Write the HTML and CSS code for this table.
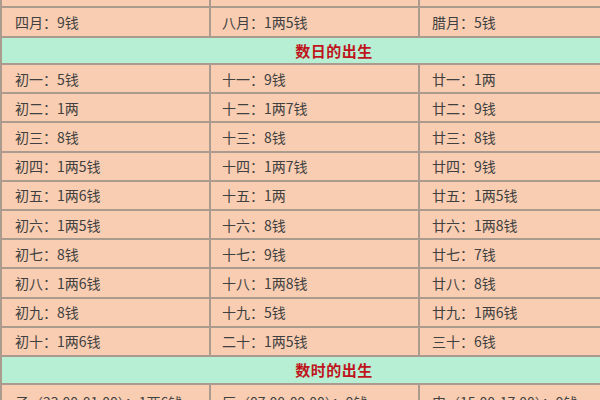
FILE: index.html
```html
<!DOCTYPE html>
<html lang="zh">
<head>
<meta charset="utf-8">
<title>称骨表</title>
<link rel="stylesheet" href="styles.css">
</head>
<body>
<div class="viewport">
  <div class="table">
    <div class="cell c1">三月：1两8钱</div>
    <div class="cell c2">七月：9钱</div>
    <div class="cell c3">十一月：9钱</div>

    <div class="cell c1">四月：9钱</div>
    <div class="cell c2">八月：1两5钱</div>
    <div class="cell c3">腊月：5钱</div>

    <div class="head">数日的出生</div>

    <div class="cell c1">初一：5钱</div><div class="cell c2">十一：9钱</div><div class="cell c3">廿一：1两</div>
    <div class="cell c1">初二：1两</div><div class="cell c2">十二：1两7钱</div><div class="cell c3">廿二：9钱</div>
    <div class="cell c1">初三：8钱</div><div class="cell c2">十三：8钱</div><div class="cell c3">廿三：8钱</div>
    <div class="cell c1">初四：1两5钱</div><div class="cell c2">十四：1两7钱</div><div class="cell c3">廿四：9钱</div>
    <div class="cell c1">初五：1两6钱</div><div class="cell c2">十五：1两</div><div class="cell c3">廿五：1两5钱</div>
    <div class="cell c1">初六：1两5钱</div><div class="cell c2">十六：8钱</div><div class="cell c3">廿六：1两8钱</div>
    <div class="cell c1">初七：8钱</div><div class="cell c2">十七：9钱</div><div class="cell c3">廿七：7钱</div>
    <div class="cell c1">初八：1两6钱</div><div class="cell c2">十八：1两8钱</div><div class="cell c3">廿八：8钱</div>
    <div class="cell c1">初九：8钱</div><div class="cell c2">十九：5钱</div><div class="cell c3">廿九：1两6钱</div>
    <div class="cell c1">初十：1两6钱</div><div class="cell c2">二十：1两5钱</div><div class="cell c3">三十：6钱</div>

    <div class="head">数时的出生</div>

    <div class="cell c1 hour">子（23:00-01:00）：1两6钱</div>
    <div class="cell c2 hour">辰（07:00-09:00）：9钱</div>
    <div class="cell c3 hour">申（15:00-17:00）：9钱</div>
  </div>
</div>
</body>
</html>
```

FILE: styles.css
```css
html, body {
  margin: 0;
  padding: 0;
  background: #f8cdb2;
}

.viewport {
  width: 600px;
  height: 400px;
  overflow: hidden;
}

.table {
  width: 664px;
  display: grid;
  grid-template-columns: 207px 207px 1fr;
  grid-template-rows: 28px 28px 25px repeat(10, 27.2px) 26px 40px;
  gap: 2px;
  padding-left: 2px;
  margin-top: -22px;
  background: #ab9b8e;
  font-family: "Noto Sans CJK SC", "Noto Sans", sans-serif;
  font-size: 14px;
  color: #404040;
}

.cell {
  background: #f8cdb2;
  display: flex;
  align-items: center;
  white-space: nowrap;
  overflow: hidden;
}

.c1 { padding-left: 13px; }
.c2 { padding-left: 11px; }
.c3 { padding-left: 12px; }

.hour {
  align-items: flex-start;
  padding-top: 7px;
}

.head {
  grid-column: 1 / -1;
  background: #b6efd3;
  display: flex;
  align-items: center;
  justify-content: center;
  color: #c0141c;
  font-weight: bold;
  font-size: 15px;
  letter-spacing: 0.5px;
}
```
